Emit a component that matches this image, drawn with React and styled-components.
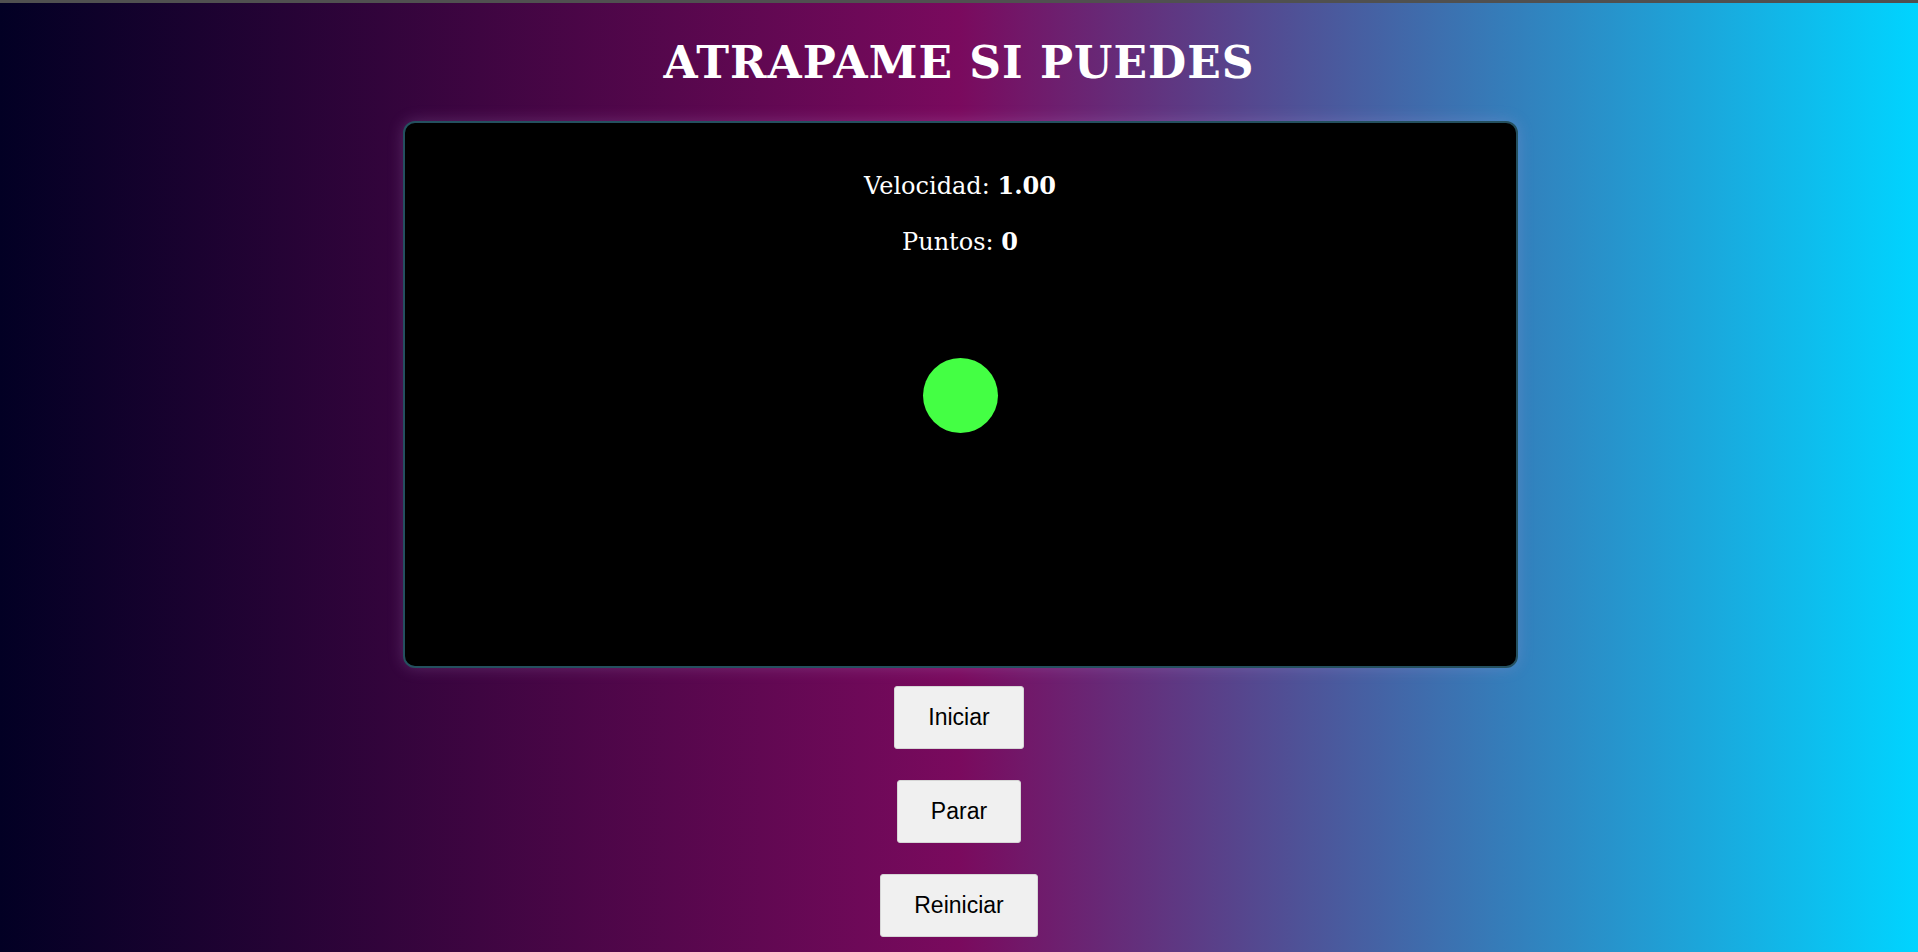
import React, { useState } from 'react'
import styled, { createGlobalStyle } from 'styled-components'

const GlobalStyle = createGlobalStyle`
  html, body {
    margin: 0;
    padding: 0;
  }
  body {
    font-family: "DejaVu Serif", "Liberation Serif", serif;
  }
`;

const App = () => {
  const [velocidad] = useState(1);
  const [puntos] = useState(0);

  return (
    <Page>
      <GlobalStyle />
      <STitle>ATRAPAME SI PUEDES</STitle>
      <GameArea>
        <Stats>
          <SP>Velocidad: <b>{velocidad.toFixed(2)}</b></SP>
          <SP>Puntos: <b>{puntos}</b></SP>
        </Stats>
        <Ball />
      </GameArea>
      <Controls>
        <SButton>Iniciar</SButton>
        <SButton>Parar</SButton>
        <SButton>Reiniciar</SButton>
      </Controls>
    </Page>
  )
}

export default App

const Page = styled.div`
  min-height: 100vh;
  box-sizing: border-box;
  border-top: 3px solid #505050;
  padding-top: 34px;
  background: linear-gradient(90deg, #020024 0%, #7a0a5e 50%, #00d4ff 100%);
  display: flex;
  flex-direction: column;
  align-items: center;
`;

const STitle = styled.h1`
  margin: 0;
  font-family: "DejaVu Serif", "Liberation Serif", serif;
  font-weight: bold;
  font-size: 44px;
  line-height: 52px;
  letter-spacing: 1px;
  color: #ffffff;
`;

const GameArea = styled.div`
  position: relative;
  margin-top: 32px;
  margin-left: 2px;
  width: 1111px;
  height: 543px;
  background: #000;
  border: 2px solid #24505f;
  border-radius: 12px;
  box-shadow: 0 0 16px rgba(210, 170, 235, 0.22);
`;

const Stats = styled.div`
  display: flex;
  flex-direction: column;
  align-items: center;
  gap: 26px;
  padding-top: 48px;
`;

const SP = styled.p`
  margin: 0;
  font-size: 24px;
  line-height: 30px;
  color: #fff;
`;

const Ball = styled.div`
  position: absolute;
  left: calc(50% - 37.5px);
  top: 235px;
  width: 75px;
  height: 75px;
  border-radius: 50%;
  background: #44ff44;
`;

const Controls = styled.div`
  display: flex;
  flex-direction: column;
  align-items: center;
  gap: 31px;
  margin-top: 18px;
  padding-bottom: 16px;
`;

const SButton = styled.button`
  font-family: "Liberation Sans", Arial, sans-serif;
  font-size: 23px;
  padding: 17px 33px;
  color: #000;
  background: #f0f0f0;
  border: 1px solid #d6d6d6;
  border-radius: 3px;
  cursor: pointer;
`;
